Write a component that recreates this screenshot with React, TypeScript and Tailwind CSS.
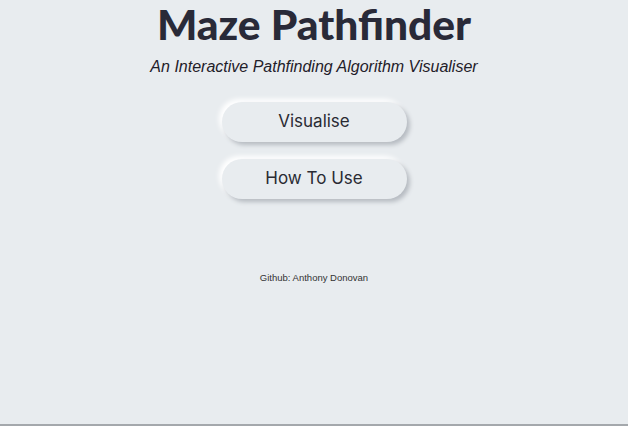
export default function App() {
  return (
    <div className="relative flex h-[426px] w-[628px] flex-col items-center overflow-hidden bg-[#e8ecef] font-['Inter',sans-serif] text-[#292a38]">
      <h1 className="pt-[2px] font-['Lato',sans-serif] text-[42.5px] font-black leading-[44px]">Maze Pathfinder</h1>
      <p className="mt-[11px] font-['Liberation_Sans',sans-serif] text-[16px] italic leading-[20px] text-[#1f2029]">
        An Interactive Pathfinding Algorithm Visualiser
      </p>
      <div className="mt-[25px] flex flex-col gap-[17px]">
        <button className="h-[40px] w-[185px] rounded-[20px] bg-[#e8ecef] text-[17px] text-[#2a2b33] shadow-[3px_3px_4px_#b7bcc2,-3px_-3px_5px_#ffffff]">
          Visualise
        </button>
        <button className="h-[40px] w-[185px] rounded-[20px] bg-[#e8ecef] text-[17px] text-[#2a2b33] shadow-[3px_3px_4px_#b7bcc2,-3px_-3px_5px_#ffffff]">
          How To Use
        </button>
      </div>
      <p className="mt-[72px] font-['Liberation_Sans',sans-serif] text-[9.5px] text-[#333]">Github: Anthony Donovan</p>
      <div className="absolute bottom-0 left-0 h-[2px] w-full bg-[#a4a8ac]" />
    </div>
  );
}
